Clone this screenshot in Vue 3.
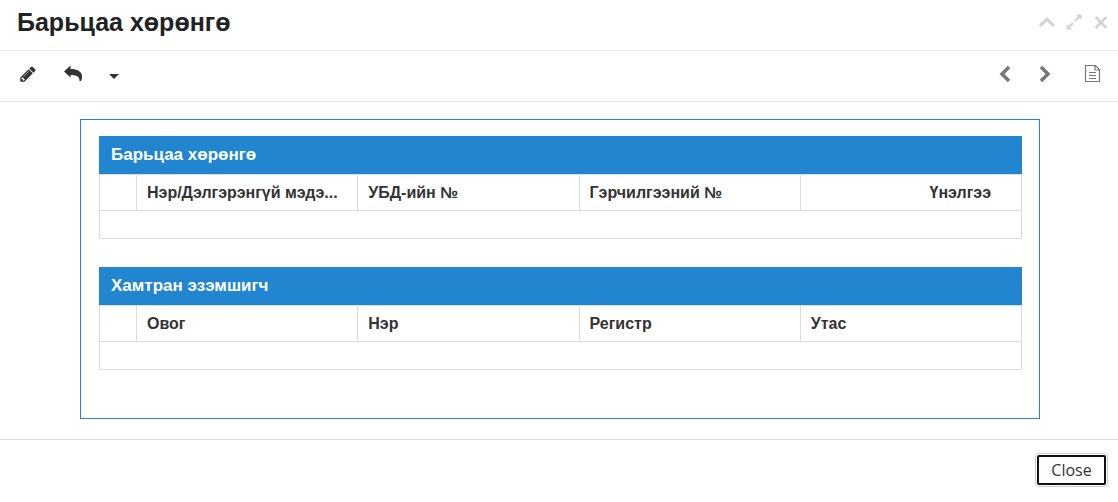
<script setup>
const sections = [
  {
    title: 'Барьцаа хөрөнгө',
    columns: [
      { label: 'Нэр/Дэлгэрэнгүй мэдэ...' },
      { label: 'УБД-ийн №' },
      { label: 'Гэрчилгээний №' },
      { label: 'Үнэлгээ', numeric: true },
    ],
  },
  {
    title: 'Хамтран эзэмшигч',
    columns: [{ label: 'Овог' }, { label: 'Нэр' }, { label: 'Регистр' }, { label: 'Утас' }],
  },
]
</script>

<template>
  <main class="dialog">
    <header class="titlebar">
      <h1>Барьцаа хөрөнгө</h1>
      <div class="window-tools">
        <button type="button" aria-label="Collapse">
          <svg width="18" height="18" viewBox="0 0 18 18"><path d="M2 12.800 9 6.200l7 6.600" fill="none" stroke="currentColor" stroke-width="3.200" /></svg>
        </button>
        <button type="button" aria-label="Maximize">
          <svg width="18" height="18" viewBox="0 0 18 18"><path d="M11 1.500h5.500V7l-2-2-3.800 3.800-1.500-1.500L13 3.500zM1.500 16.500V11l2 2 3.800-3.800 1.500 1.500L5 14.500l2 2z" fill="currentColor" /></svg>
        </button>
        <button type="button" aria-label="Close dialog">
          <svg width="18" height="18" viewBox="0 0 18 18"><path d="m3.500 4 11 11M14.500 4l-11 11" fill="none" stroke="currentColor" stroke-width="2.600" /></svg>
        </button>
      </div>
    </header>

    <nav class="toolbar" aria-label="Record">
      <div class="actions">
        <button type="button" aria-label="Edit">
          <svg width="18" height="18" viewBox="0 0 1792 1792"><path fill="currentColor" d="M491 1536l91-91-235-235-91 91v107h128v128h107zm523-928q0-22-22-22-10 0-17 7l-542 542q-7 7-7 17 0 22 22 22 10 0 17-7l542-542q7-7 7-17zm-54-192l416 416-832 832h-416v-416zm683 96q0 53-37 90l-166 166-416-416 166-165q36-38 90-38 53 0 91 38l235 234q37 39 37 91z" /></svg>
        </button>
        <button type="button" aria-label="Back">
          <svg width="20" height="18" viewBox="0 0 20 18"><path fill="currentColor" d="M1 6.500 7.500.500V4C14.500 4 19 6.500 19 11.500c0 2-.300 3-1 4.500h-1.500c.300-4-2.500-6-9-6v2.500z" /></svg>
        </button>
        <button type="button" class="more" aria-label="More">
          <svg width="10" height="5" viewBox="0 0 10 5"><path fill="currentColor" d="M0 0h10L5 5z" /></svg>
        </button>
      </div>
      <div class="pager">
        <button type="button" aria-label="Previous">
          <svg width="18" height="18" viewBox="0 0 18 18"><path d="M13 2 6 9l7 7" fill="none" stroke="currentColor" stroke-width="3.500" /></svg>
        </button>
        <button type="button" aria-label="Next">
          <svg width="18" height="18" viewBox="0 0 18 18"><path d="m5 2 7 7-7 7" fill="none" stroke="currentColor" stroke-width="3.500" /></svg>
        </button>
        <button type="button" class="document" aria-label="Document">
          <svg width="18" height="20" viewBox="0 0 18 20"><path d="M11.500 1.500h-10v16h14v-12zM11 1.500V6h4.500M5 8.500h7M5 11.500h7M5 14.500h7" fill="none" stroke="currentColor" stroke-width="1.200" /></svg>
        </button>
      </div>
    </nav>

    <div class="content">
      <div class="panel">
        <section v-for="section in sections" :key="section.title">
          <h2>{{ section.title }}</h2>
          <table :aria-label="section.title">
            <colgroup>
              <col class="marker" />
              <col v-for="column in section.columns" :key="column.label" />
            </colgroup>
            <thead>
              <tr>
                <td></td>
                <th v-for="column in section.columns" :key="column.label" scope="col" :class="{ numeric: column.numeric }">
                  {{ column.label }}
                </th>
              </tr>
            </thead>
            <tbody>
              <tr>
                <td colspan="5"></td>
              </tr>
            </tbody>
          </table>
        </section>
      </div>
    </div>

    <footer>
      <button type="button" class="close">Close</button>
    </footer>
  </main>
</template>

<style>
body {
  background: #fff;
}
</style>

<style scoped>
.dialog {
  font-family: "Liberation Sans", Arial, sans-serif;
  color: #333;
}
button {
  display: flex;
  align-items: center;
  justify-content: center;
  padding: 0;
  border: 0;
  background: none;
  color: inherit;
  cursor: pointer;
}
.titlebar {
  display: flex;
  align-items: center;
  justify-content: space-between;
  box-sizing: border-box;
  height: 51px;
  padding: 0 8px 6px 17px;
  border-bottom: 1px solid #e9e9e9;
}
h1 {
  margin: 0;
  color: #222;
  font-size: 25px;
  line-height: 32px;
}
.window-tools {
  display: flex;
  gap: 9px;
  color: #d3d3d3;
}
.toolbar {
  display: flex;
  align-items: center;
  justify-content: space-between;
  box-sizing: border-box;
  height: 51px;
  padding: 0 16px 4px 19px;
  border-bottom: 1px solid #e5e5e5;
}
.actions {
  display: flex;
  align-items: center;
  gap: 26px;
}
.more {
  padding-top: 4px;
}
.pager {
  display: flex;
  align-items: center;
  gap: 22px;
  color: #777;
}
.document {
  padding-left: 8px;
}
.content {
  padding: 17px 78px 20px 80px;
}
.panel {
  padding: 16px 17px 20px 18px;
  border: 1px solid #2185d0;
}
section {
  margin-bottom: 28px;
}
h2 {
  margin: 0;
  padding: 0 12px;
  background: #2185d0;
  color: #fff;
  font-size: 17px;
  line-height: 38px;
}
table {
  width: 100%;
  border-collapse: collapse;
  table-layout: fixed;
}
.marker {
  width: 37px;
}
th,
td {
  box-sizing: border-box;
  border: 1px solid #ddd;
}
th {
  height: 36px;
  padding: 0 10px;
  font-size: 16px;
  text-align: left;
  white-space: nowrap;
}
th.numeric {
  padding-right: 30px;
  text-align: right;
}
tbody td {
  height: 28px;
}
footer {
  display: flex;
  justify-content: flex-end;
  padding: 13px 10px 15px;
  border-top: 1px solid #ddd;
}
.close {
  height: 34px;
  width: 73px;
  border: 1px solid #ccc;
  outline: 2px solid #101010;
  outline-offset: -4px;
  border-radius: 4px;
  font-family: "Open Sans", sans-serif;
  font-size: 16px;
}
</style>
